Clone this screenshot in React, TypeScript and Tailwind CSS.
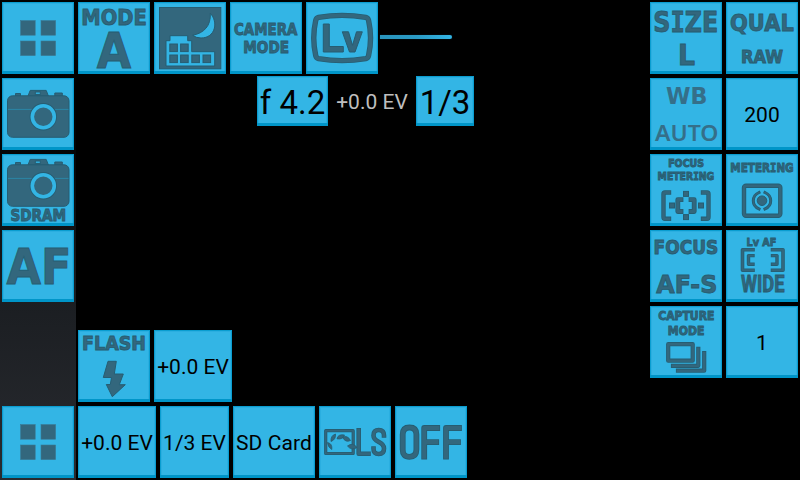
import React from "react";

const FILL = "#33677d";
const EDGE = "#265d72";

type TileProps = { children: React.ReactNode; className?: string };

function Tile({ children, className = "h-[72px] w-[72px]" }: TileProps) {
  return (
    <button
      className={`flex shrink-0 items-center justify-center overflow-hidden whitespace-nowrap bg-[#33b5e5] shadow-[inset_0_-3px_0_#0095c8,inset_0_0_0_1px_#0a9dd0,inset_0_0_0_2px_#2aaee0] font-[Roboto,sans-serif] text-[21px] leading-none text-black ${className}`}
    >
      {children}
    </button>
  );
}

function TextTile({ children, className }: TileProps) {
  return (
    <Tile className={className}>
      <span className="pt-[2px]">{children}</span>
    </Tile>
  );
}

function IconTile({ children }: { children: React.ReactNode }) {
  return (
    <Tile>
      <svg width="72" height="72" viewBox="0 0 72 72" fill={FILL} stroke={EDGE} strokeWidth="1" className="block">
        {children}
      </svg>
    </Tile>
  );
}

type LabelProps = {
  x1: number;
  x2: number;
  top: number;
  base: number;
  children: React.ReactNode;
  font?: "DejaVu Sans" | "Noto Sans" | "Roboto";
  weight?: number;
  plain?: boolean;
};

const CAP_RATIO = { "DejaVu Sans": 0.729, "Noto Sans": 0.714, Roboto: 0.711 };

/* Caps label fitted between x1/x2 and between its cap line and baseline. */
function Label({ x1, x2, top, base, children, font = "DejaVu Sans", weight = 700, plain }: LabelProps) {
  return (
    <text
      x={x1}
      y={base - 0.4}
      textLength={x2 - x1}
      lengthAdjust="spacingAndGlyphs"
      fontFamily={`"${font}", sans-serif`}
      fontWeight={weight}
      fontSize={(base - top - 0.8) / CAP_RATIO[font]}
      fill={plain ? "#356f89" : FILL}
      stroke={plain ? "none" : EDGE}
      strokeWidth={0.9}
    >
      {children}
    </text>
  );
}

/* Capital I with serifs. */
function SerifI() {
  return <tspan fontFamily='"DejaVu Sans Mono", monospace'>I</tspan>;
}

/* Thick line with a darker rim. */
function Line({ d, w }: { d: string; w: number }) {
  return (
    <>
      <path d={d} fill="none" stroke={EDGE} strokeWidth={w} strokeLinejoin="round" strokeLinecap="square" />
      <path d={d} fill="none" stroke={FILL} strokeWidth={w - 1.6} strokeLinejoin="round" strokeLinecap="square" />
    </>
  );
}

function GridTile() {
  return (
    <IconTile>
      <g stroke="#3a7892" strokeWidth="0.6">
        <rect x="18.6" y="18.6" width="14.6" height="14.6" />
        <rect x="39" y="18.6" width="14.6" height="14.6" />
        <rect x="18.6" y="39" width="14.6" height="14.6" />
        <rect x="39" y="39" width="14.6" height="14.6" />
      </g>
    </IconTile>
  );
}

function CameraShape() {
  return (
    <>
      <path d="M13.5 18v-2.5h5V18z M52.8 18v-3h7.5v3z" />
      <path d="M26 18l2.2-5.6h16L46.4 18z" />
      <rect x="5.5" y="17.8" width="61.5" height="41.5" rx="5" />
      <rect x="33.3" y="14" width="5" height="2.4" fill="#33b5e5" />
      <path d="M6 31.4h60.5" stroke="#2b86a6" />
      <circle cx="41.3" cy="38.7" r="11" stroke={EDGE} strokeWidth="5.4" />
      <circle cx="41.3" cy="38.7" r="11" stroke="#33b5e5" strokeWidth="3.6" />
    </>
  );
}

function NightCity() {
  return (
    <IconTile>
      <rect x="5.5" y="5.5" width="61.3" height="61.3" />
      <g fill="#33b5e5" stroke={EDGE}>
        <path d="M56.3 11.3C64.5 20 61.5 36 47 36Q42 36 38.7 33.3C50 31 57 24 56.3 11.3z" />
        <path d="M12 38.7h4v-5h17.7v5h4v11h23V64H12z" />
      </g>
      <g>
        <rect x="15.8" y="42" width="7.6" height="7.6" />
        <rect x="26.6" y="42" width="7.6" height="7.6" />
        <rect x="15.8" y="53" width="7.6" height="7.6" />
        <rect x="26.6" y="53" width="7.6" height="7.6" />
        <rect x="37.8" y="53" width="7.6" height="7.6" />
        <rect x="49" y="53" width="7.6" height="7.6" />
      </g>
    </IconTile>
  );
}

function LiveView() {
  return (
    <IconTile>
      <Line w={5.4} d="M12.5 15.3Q36 11.5 59.8 15.3Q62 15.8 62.6 18.5Q66.5 36 62.6 53.5Q62 56.2 59.8 56.7Q36 60.5 12.5 56.7Q10.3 56.2 9.7 53.5Q5.8 36 9.7 18.5Q10.3 15.8 12.5 15.3z" />
      <path d="M17.3 22h6v22.5h14V50h-20z" />
      <path d="M36.3 29.8h6.2l4 13.5 4-13.5h5.8L49 50h-5.5z" />
    </IconTile>
  );
}

function FocusMetering() {
  return (
    <IconTile>
      <Label x1={18.2} x2={54} top={5.4} base={13.7}>FOCUS</Label>
      <Label x1={7.6} x2={64.3} top={18.4} base={26.7}>METER<SerifI />NG</Label>
      <Line w={4.4} d="M19 38.5h-4q-1.5 0-1.5 1.5v23q0 1.8 1.5 1.8h4 M53 38.5h4q1.5 0 1.5 1.5v23q0 1.8-1.5 1.8h-4" />
      <Line w={4.8} d="M31 45.7h-3.2v11.8H31 M41 45.7h3.2v11.8H41" />
      <rect x="33.5" y="37.4" width="5" height="5" />
      <rect x="33.5" y="60.6" width="5" height="5" />
      <rect x="19.5" y="49" width="5" height="5" />
      <rect x="48.5" y="49" width="5" height="5" />
    </IconTile>
  );
}

function Metering() {
  return (
    <IconTile>
      <Label x1={4.3} x2={67.7} top={9.1} base={18.8}>METER<SerifI />NG</Label>
      <rect x="18" y="31.7" width="36.3" height="30" rx="2" fill="none" stroke={EDGE} strokeWidth="4.4" />
      <rect x="18" y="31.7" width="36.3" height="30" rx="2" fill="none" stroke={FILL} strokeWidth="2.6" />
      <circle cx="36" cy="46.7" r="4.8" />
      <Line w={3} d="M33 38.5Q27.3 41 27.3 46.7T33 54.9 M39 38.5Q44.7 41 44.7 46.7T39 54.9" />
    </IconTile>
  );
}

function WideArea() {
  return (
    <IconTile>
      <Label x1={20.5} x2={50.5} top={7.2} base={16.2}>Lv AF</Label>
      <Line w={3.6} d="M27 19.8H16.5v20.5H27 M46.5 19.8H57v20.5H46.5" />
      <Line w={3.4} d="M27 25.6h-4.5v8.6H27 M46.5 25.6H51v8.6h-4.5" />
      <Label x1={15} x2={58.5} top={44.3} base={62} font="Roboto">WIDE</Label>
    </IconTile>
  );
}

function CaptureMode() {
  return (
    <IconTile>
      <Label x1={8.2} x2={64.4} top={5.3} base={14.7}>CAPTURE</Label>
      <Label x1={17.8} x2={54.5} top={19.9} base={29.4}>MODE</Label>
      <Line w={4.2} d="M18.2 38.2h24.5v16.5H18.2z" />
      <Line w={4.2} d="M48.3 42.8v17H23" />
      <Line w={4.2} d="M54.2 47.2v17.5H28" />
    </IconTile>
  );
}

function Flash() {
  return (
    <IconTile>
      <Label x1={4} x2={68} top={5.5} base={20.5}>FLASH</Label>
      <path d="M30 31.3h8.3L36.3 44h9l-4 10.7h6L34.3 66.7 28.3 54.5h4l1.2-7H25.3z" />
    </IconTile>
  );
}

function Landscape() {
  return (
    <IconTile>
      <Line w={3.2} d="M6.7 24.7h27.5v22.8H6.7z" />
      <g strokeWidth="0.8">
        <path d="M8.5 36.5Q13.5 37.5 12.8 43.5Q9 41.5 8.5 36.5z" />
        <path d="M12 35.5Q11.5 29.5 16.5 28Q17 33.5 12 35.5z" />
        <path d="M18 32.8Q19 27.8 25.5 29Q24 33.8 18 32.8z" />
        <path d="M23.5 31.3Q28.5 28.8 31.5 34.5Q26.5 37 23.5 31.3z" />
        <path d="M28.5 40Q33.5 36 38.2 41.5Q32.5 45 28.5 40z" />
      </g>
      <Line w={4.6} d="M39.7 24.2v23.5h9.8" />
      <Line w={4.6} d="M65 29.5Q65 24 59.7 24T54.5 29.5Q54.5 33.5 59.7 35.8T65 42.5Q65 48 59.7 48T54.5 42.5" />
    </IconTile>
  );
}

function Off() {
  return (
    <IconTile>
      <Line w={5.8} d="M14.5 21.5Q21.4 21.5 21.4 28.5V43.5Q21.4 50.8 14.5 50.8T7.7 43.5V28.5Q7.7 21.5 14.5 21.5z" />
      <Line w={5.8} d="M29.2 50.6V22h13 M29.2 36.2h12" />
      <Line w={5.8} d="M51 50.6V22h13 M51 36.2h12" />
    </IconTile>
  );
}

export default function App() {
  return (
    <div className="flex h-[480px] w-[800px] overflow-hidden bg-black">
      <aside className="flex w-[76px] shrink-0 flex-col gap-1 bg-linear-to-b from-black via-[#1a1d21] via-[60%] to-[#292b30] p-[2px]">
        <GridTile />
        <IconTile>
          <CameraShape />
        </IconTile>
        <IconTile>
          <g transform="translate(0 -7)">
            <CameraShape />
          </g>
          <Label x1={8.4} x2={64.2} top={55.5} base={67.3}>SDRAM</Label>
        </IconTile>
        <IconTile>
          <Label x1={4.5} x2={69.5} top={17.5} base={54.4}>AF</Label>
        </IconTile>
        <div className="mt-auto">
          <GridTile />
        </div>
      </aside>

      <main className="flex flex-1 flex-col p-[2px]">
        <div className="flex items-center gap-1">
          <IconTile>
            <Label x1={3.3} x2={68.8} top={6.8} base={23}>MODE</Label>
            <Label x1={18.8} x2={53.2} top={29.8} base={66.3}>A</Label>
          </IconTile>
          <NightCity />
          <IconTile>
            <Label x1={4} x2={67.3} top={21} base={33.3}>CAMERA</Label>
            <Label x1={13.3} x2={59} top={39.5} base={51.3}>MODE</Label>
          </IconTile>
          <LiveView />
          <div className="-ml-[2px] mt-[-2px] h-1 w-[72px] rounded-r-sm bg-linear-to-r from-[#2a95bd] via-[#2a9ac4] to-[#33b5e5] shadow-[0_0_1px_#12506a]" />
        </div>
        <div className="mt-[2px] flex items-center pl-[179px] font-[Roboto,sans-serif]">
          <Tile className="h-[50px] w-[71px]">
            <span className="pt-[2px] text-[33px]">f 4.2</span>
          </Tile>
          <span className="w-[88px] pt-[2px] text-center text-[21px] leading-none whitespace-nowrap text-[#bebebe]">+0.0 EV</span>
          <Tile className="h-[50px] w-[58px]">
            <span className="pt-[2px] text-[33px]">1/3</span>
          </Tile>
        </div>

        <div className="mt-auto flex gap-1">
          <Flash />
          <TextTile className="h-[72px] w-[78px]">+0.0 EV</TextTile>
        </div>
        <div className="mt-1 flex gap-1">
          <TextTile className="h-[72px] w-[78px]">+0.0 EV</TextTile>
          <TextTile className="h-[72px] w-[69px]">1/3 EV</TextTile>
          <TextTile className="h-[72px] w-[82px]">
            <span className="tracking-[0.12px]">SD Card</span>
          </TextTile>
          <Landscape />
          <Off />
        </div>
      </main>

      <aside className="grid shrink-0 grid-cols-2 content-start gap-1 p-[2px]">
        <IconTile>
          <Label x1={3.3} x2={68.3} top={8.8} base={30.5}>S<SerifI />ZE</Label>
          <Label x1={28} x2={45} top={42.5} base={63.6}>L</Label>
        </IconTile>
        <IconTile>
          <Label x1={4} x2={67.8} top={11.5} base={29.5}>QUAL</Label>
          <Label x1={15} x2={57} top={47.8} base={61.2}>RAW</Label>
        </IconTile>
        <IconTile>
          <Label x1={16} x2={57.5} top={8.3} base={26} plain>WB</Label>
          <Label x1={5} x2={68.5} top={46.3} base={63} font="Noto Sans" weight={600} plain>AUTO</Label>
        </IconTile>
        <TextTile>200</TextTile>
        <FocusMetering />
        <Metering />
        <IconTile>
          <Label x1={3.5} x2={68.3} top={9.3} base={24}>FOCUS</Label>
          <Label x1={6.3} x2={67.3} top={44} base={63}>AF-S</Label>
        </IconTile>
        <WideArea />
        <CaptureMode />
        <TextTile>1</TextTile>
      </aside>
    </div>
  );
}
